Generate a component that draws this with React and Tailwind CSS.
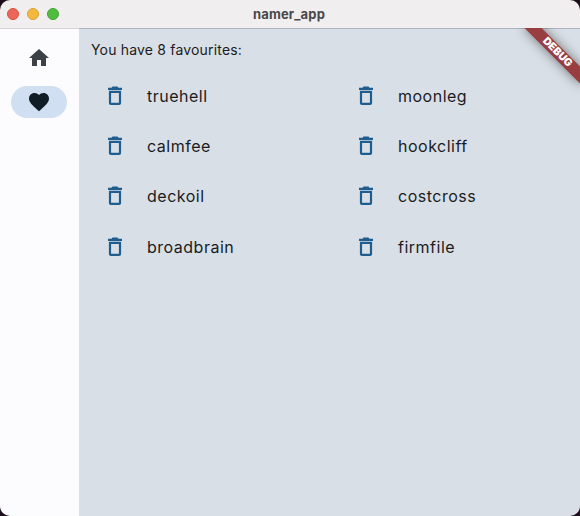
const names = [
  "truehell",
  "moonleg",
  "calmfee",
  "hookcliff",
  "deckoil",
  "costcross",
  "broadbrain",
  "firmfile",
];

function Icon({ d, className }) {
  return (
    <svg viewBox="0 0 24 24" className={`size-6 shrink-0 fill-current ${className}`}>
      <path d={d} />
    </svg>
  );
}

const HOME = "M10 20v-6h4v6h5v-8h3L12 3 2 12h3v8z";
const HEART =
  "M12 21.35l-1.45-1.32C5.4 15.36 2 12.28 2 8.5 2 5.42 4.42 3 7.5 3c1.74 0 3.41.81 4.5 2.09C13.09 3.81 14.76 3 16.5 3 19.58 3 22 5.42 22 8.5c0 3.78-3.4 6.86-8.55 11.54L12 21.35z";
const TRASH =
  "M5.9 19c0 1.2.8 2 2 2h8.2c1.2 0 2-.8 2-2V6.8H5.9zM8.1 8.9h7.8v9.9H8.1zM15.5 3.7l-1-1.1h-5l-1 1.1H5v2.3h14V3.7z";

function TitleBar() {
  return (
    <header className="grid h-7 shrink-0 grid-cols-[1fr_auto_1fr] items-center bg-[#f0eeef] pr-[2px] pl-[7px]">
      <div className="flex gap-2">
        <span className="size-3 rounded-full border border-[#d8503f] bg-[#ed6558]" />
        <span className="size-3 rounded-full border border-[#dca035] bg-[#f5b83e]" />
        <span className="size-3 rounded-full border border-[#43a233] bg-[#50bd41]" />
      </div>
      <h1 className="-ml-[7px] text-[13px] leading-none font-bold tracking-[0.15px] text-[#49474a]">namer_app</h1>
      <div />
    </header>
  );
}

export default function App() {
  return (
    <div className="h-[516px] w-[580px] bg-[#1c0d1c] font-['Inter','Liberation_Sans',sans-serif]">
      <div className="flex h-full flex-col overflow-hidden rounded-[10px]">
        <TitleBar />
        <div className="relative flex grow overflow-hidden">
          <nav className="flex w-[79px] shrink-0 flex-col items-center border-t border-[#d5d3d6] bg-[#fcfcff] pt-[13px] pr-px">
            <div className="flex h-8 w-14 items-center justify-center">
              <Icon d={HOME} className="text-[#3c4147]" />
            </div>
            <div className="mt-3 flex h-8 w-14 items-center justify-center rounded-full bg-[#d0dff1]">
              <Icon d={HEART} className="text-[#101c26]" />
            </div>
          </nav>
          <main className="grow border-t border-[#b0b5c2] bg-[#d9dfe6] pl-3 text-[#1a1c1e]">
            <p className="pt-[11px] text-[14px] leading-5 tracking-[0.18px]">You have 8 favourites:</p>
            <ul className="mt-[11px] grid grid-cols-[251px_1fr] auto-rows-[50.2px]">
              {names.map((name) => (
                <li key={name} className="flex items-center pl-3">
                  <Icon d={TRASH} className="text-[#1f5d8f]" />
                  <span className="pl-5 text-[16px] leading-6 tracking-[0.5px]">{name}</span>
                </li>
              ))}
            </ul>
          </main>
          <div className="absolute top-[18px] left-[517px] flex h-3 w-20 rotate-45 items-center justify-center bg-[#983e41] text-[10.6px] leading-none font-black text-white shadow-[0_0_12px_rgba(0,0,0,0.5)]">
            <span className="pl-px">DEBUG</span>
          </div>
        </div>
      </div>
    </div>
  );
}
